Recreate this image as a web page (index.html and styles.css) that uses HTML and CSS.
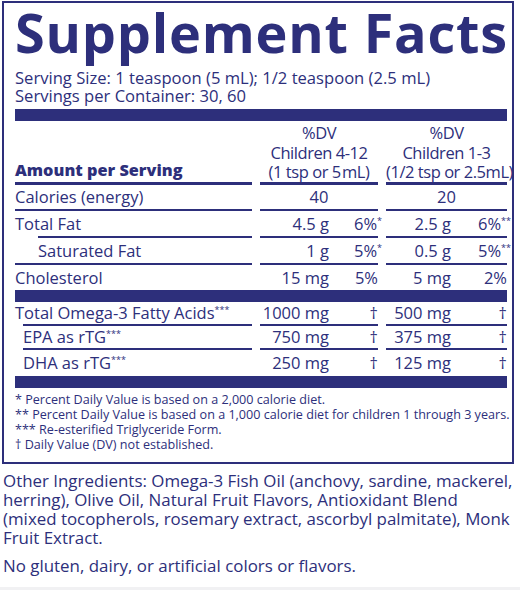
FILE: index.html
```html
<!DOCTYPE html>
<html>
<head>
<meta charset="utf-8">
<link rel="stylesheet" href="styles.css">
</head>
<body>
<div class="page">
  <div class="label">
    <h1 class="title">Supplement Facts</h1>
    <p class="serving">Serving Size: 1 teaspoon (5 mL); 1/2 teaspoon (2.5 mL)<br>Servings per Container: 30, 60</p>
    <div class="bar"></div>
    <div class="row head">
      <div class="name amt">Amount per Serving</div>
      <div class="colhead">%DV<br>Children 4-12<br>(1 tsp or 5&#8202;mL)</div>
      <div class="colhead">%DV<br>Children 1-3<br>(1/2 tsp or 2.5mL)</div>
    </div>
    <div class="row r24">
      <div class="name">Calories (energy)</div>
      <div class="val c1 center">40</div>
      <div class="val c2 center">20</div>
    </div>
    <div class="row r25 next-ind">
      <div class="name">Total Fat</div>
      <div class="val c1"><span class="amt-v">4.5 g</span><span class="dv">6%<sup>*</sup></span></div>
      <div class="val c2"><span class="amt-v">2.5 g</span><span class="dv">6%<sup>**</sup></span></div>
    </div>
    <div class="row r25">
      <div class="name ind">Saturated Fat</div>
      <div class="val c1"><span class="amt-v">1 g</span><span class="dv">5%<sup>*</sup></span></div>
      <div class="val c2"><span class="amt-v">0.5 g</span><span class="dv">5%<sup>**</sup></span></div>
    </div>
    <div class="row r25 noline">
      <div class="name">Cholesterol</div>
      <div class="val c1"><span class="amt-v">15 mg</span><span class="dv">5%</span></div>
      <div class="val c2"><span class="amt-v">5 mg</span><span class="dv">2%</span></div>
    </div>
    <div class="bar mid"></div>
    <div class="row r22 next-ind2">
      <div class="name">Total Omega-3 Fatty Acids<sup>***</sup></div>
      <div class="val c1"><span class="amt-v">1000 mg</span><span class="dv">†</span></div>
      <div class="val c2"><span class="amt-v">500 mg</span><span class="dv">†</span></div>
    </div>
    <div class="row r22 next-ind2">
      <div class="name ind2">EPA as rTG<sup>***</sup></div>
      <div class="val c1"><span class="amt-v">750 mg</span><span class="dv">†</span></div>
      <div class="val c2"><span class="amt-v">375 mg</span><span class="dv">†</span></div>
    </div>
    <div class="row r26 noline">
      <div class="name ind2">DHA as rTG<sup>***</sup></div>
      <div class="val c1"><span class="amt-v">250 mg</span><span class="dv">†</span></div>
      <div class="val c2"><span class="amt-v">125 mg</span><span class="dv">†</span></div>
    </div>
    <div class="bar end"></div>
    <div class="notes">
      <p>* Percent Daily Value is based on a 2,000 calorie diet.</p>
      <p>** Percent Daily Value is based on a 1,000 calorie diet for children 1 through 3 years.</p>
      <p>*** Re-esterified Triglyceride Form.</p>
      <p>† Daily Value (DV) not established.</p>
    </div>
  </div>
  <p class="ingredients">Other Ingredients: Omega-3 Fish Oil (anchovy, sardine, mackerel,<br>herring), Olive Oil, Natural Fruit Flavors, Antioxidant Blend<br>(mixed tocopherols, rosemary extract, ascorbyl palmitate), Monk<br>Fruit Extract.</p>
  <p class="free">No gluten, dairy, or artificial colors or flavors.</p>
</div>
</body>
</html>
```
FILE: styles.css
```css
html {
  background: #f1f1f3;
}
body {
  margin: 0;
  font-family: "Open Sans", "Noto Sans", sans-serif;
  color: #2d2f7b;
}
.page {
  background: #ffffff;
  height: 587px;
  overflow: hidden;
  padding-top: 1px;
  box-sizing: border-box;
}
.label {
  margin-left: 2px;
  width: 512px;
  box-sizing: border-box;
  border: 2px solid #2d2f7b;
  padding: 0 5px 0 11px;
}
.title {
  margin: 0;
  padding-top: 2px;
  font-size: 54px;
  line-height: 54px;
  font-weight: 700;
  letter-spacing: 0.8px;
  white-space: nowrap;
}
.serving {
  margin: 10px 0 0;
  font-size: 16.6px;
  line-height: 17.5px;
}
.bar {
  height: 12px;
  background: #2d2f7b;
  margin-top: 5px;
}
.bar.mid {
  margin-top: 0;
}
.bar.end {
  margin-top: 0;
  height: 12px;
}
.row {
  display: grid;
  grid-template-columns: 237px 118px 121px;
  column-gap: 8px;
  font-size: 16.5px;
}
.row > div {
  border-bottom: 2px solid #2d2f7b;
  white-space: nowrap;
}
.row.noline > div {
  border-bottom: none;
}
.row.r24 { line-height: 24px; }
.row.r25 { line-height: 25px; }
.row.r22 { line-height: 22px; }
.row.r26 { line-height: 26px; }
.row.next-ind > .name {
  border-bottom: none;
  background: linear-gradient(#2d2f7b, #2d2f7b) no-repeat left 23px bottom / calc(100% - 23px) 2px;
  padding-bottom: 2px;
}
.row.next-ind2 > .name {
  border-bottom: none;
  background: linear-gradient(#2d2f7b, #2d2f7b) no-repeat left 8px bottom / calc(100% - 8px) 2px;
  padding-bottom: 2px;
}
.head {
  line-height: 19.5px;
  padding-top: 2px;
}
.head > div {
  border-bottom-width: 3px;
}
.amt {
  display: flex;
  align-items: flex-end;
  font-weight: 800;
  font-size: 16.3px;
  line-height: 24px;
}
.colhead {
  text-align: center;
  letter-spacing: -0.45px;
}
.name.ind { padding-left: 23px; }
.name.ind2 { padding-left: 8px; }
.val {
  display: grid;
}
.val.c1 { grid-template-columns: 69px 1fr; }
.val.c2 { grid-template-columns: 65px 1fr; }
.val.center {
  display: block;
  text-align: center;
}
.amt-v { text-align: right; }
.dv { text-align: right; }
sup {
  font-size: 9px;
  line-height: 0;
  vertical-align: 6px;
}
.dv sup { margin-right: -4px; }
.notes {
  padding: 4px 0 10px;
  font-size: 12.6px;
  line-height: 15px;
}
.notes p {
  margin: 0;
  white-space: nowrap;
}
.ingredients {
  margin: 7px 0 0;
  padding: 0 0 0 3px;
  font-size: 16.9px;
  line-height: 19px;
  white-space: nowrap;
}
.free {
  margin: 9px 0 0;
  padding-left: 3px;
  font-size: 16.9px;
  line-height: 19px;
}
```
